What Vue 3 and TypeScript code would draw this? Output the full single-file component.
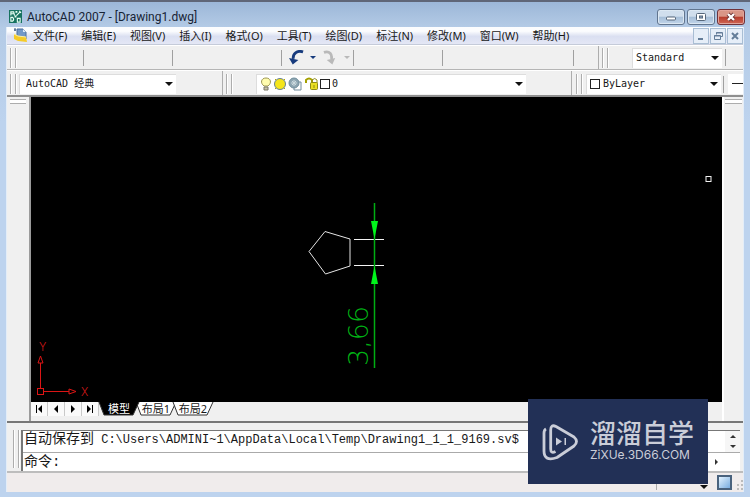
<script setup lang="ts">
import { ref } from 'vue'

const menus: string[] = [
  '文件(F)', '编辑(E)', '视图(V)', '插入(I)', '格式(O)', '工具(T)',
  '绘图(D)', '标注(N)', '修改(M)', '窗口(W)', '帮助(H)',
]
const tabs: string[] = ['模型', '布局1', '布局2']
const activeTab = ref<string>('模型')
const workspace = ref<string>('AutoCAD 经典')
const textStyle = ref<string>('Standard')
const layer = ref<string>('0')
const color = ref<string>('ByLayer')
const command = ref<string>('')
const navShapes: { label: string; path: string }[] = [
  { label: '第一个', path: 'M3 2h1v8h-1zM9 2v8l-4-4z' },
  { label: '上一个', path: 'M8 2v8l-4-4z' },
  { label: '下一个', path: 'M4 2v8l4-4z' },
  { label: '最后一个', path: 'M3 2v8l4-4zM8 2h1v8h-1z' },
]
</script>

<template>
  <div class="window">
    <header class="titlebar">
      <svg class="app-icon" viewBox="0 0 14 14" aria-hidden="true">
        <rect width="14" height="14" fill="#17725f" />
        <path d="M2 6V2h3l1 4M2 4h4M8 6l4-4M11 1l2 2M2 12V8h2q2 2 0 4zM9 9h3v4H9z" fill="none" stroke="#e9fff4" stroke-width="1.2" />
        <path d="M7 1h2v2H7zM6 6h2v2H6z" fill="#e9fff4" />
      </svg>
      <h1>AutoCAD 2007 - [Drawing1.dwg]</h1>
      <div class="win-buttons">
        <button type="button" aria-label="最小化">
          <svg viewBox="0 0 12 10"><rect x="1.500" y="5" width="9" height="3" rx="1" fill="#fff" stroke="#56677b" /></svg>
        </button>
        <button type="button" aria-label="最大化">
          <svg viewBox="0 0 12 10"><rect x="1.500" y="1.500" width="9" height="7" rx="1" fill="#fff" stroke="#56677b" /><rect x="4.500" y="4" width="3" height="2" fill="#8fa9c5" stroke="#56677b" /></svg>
        </button>
        <button type="button" class="close" aria-label="关闭">
          <svg viewBox="0 0 12 10"><path d="M3 2l6 6M9 2L3 8" stroke="#6d3030" stroke-width="4" /><path d="M3 2l6 6M9 2L3 8" stroke="#fff" stroke-width="2.400" /></svg>
        </button>
      </div>
    </header>

    <div class="frame">
      <nav class="menubar">
        <svg class="doc-icon" viewBox="0 0 14 15" aria-hidden="true">
          <path d="M4 1h6l3 3v7H4z" fill="#7399c8" stroke="#4b6e9d" />
          <path d="M10 1v3h3" fill="#dce9f7" />
          <path d="M1 6l4 2 8 1 1 5-9-1-4-2z" fill="#f5cb28" />
          <path d="M1 6l4 2 8 1" fill="none" stroke="#fff0a0" />
          <path d="M1 2h2M2 0v3" stroke="#30517d" />
        </svg>
        <button v-for="m in menus" :key="m" type="button" class="menu">{{ m }}</button>
        <div class="mdi-buttons">
          <button type="button" aria-label="最小化文档"><svg viewBox="0 0 10 10"><path d="M2 8h5" stroke="#647d99" stroke-width="2" /></svg></button>
          <button type="button" aria-label="还原文档"><svg viewBox="0 0 10 10"><path d="M3.500 3.500V1.500h6v4h-2M1.500 4.500h6v4h-6zM3 2h6M1 5h6" fill="none" stroke="#647d99" /></svg></button>
          <button type="button" aria-label="关闭文档"><svg viewBox="0 0 10 10"><path d="M2 2l6 6M8 2L2 8" stroke="#647d99" stroke-width="2" /></svg></button>
        </div>
      </nav>

      <div class="toolbar standard-row">
        <section class="panel">
          <i class="grip"></i>
          <div class="group narrow"></div>
          <div class="group"></div>
          <div class="group wide"></div>
          <div class="group history-tools">
            <button type="button" class="tool" aria-label="放弃"><svg viewBox="0 0 16 16"><path d="M15 1.500C9-.5 4 3 4.500 9" fill="none" stroke="#173b7d" stroke-width="3" /><path d="M0 8l10 2-6 5z" fill="#173b7d" /></svg></button>
            <i class="caret small"></i>
            <button type="button" class="tool" aria-label="重做"><svg viewBox="0 0 16 16"><path d="M1 2c6-2 9 2 8 7" fill="none" stroke="#b9b9b9" stroke-width="3" /><path d="M4 10l9-2-3 7z" fill="#b9b9b9" /></svg></button>
            <i class="caret small muted"></i>
          </div>
          <div class="group"></div>
          <div class="group last"></div>
        </section>
        <section class="panel styles">
          <i class="grip"></i>
          <label class="combo text-style">
            <select v-model="textStyle" aria-label="文字样式"><option>Standard</option></select>
            <i class="caret"></i>
          </label>
          <i class="divider"></i>
        </section>
      </div>

      <div class="toolbar layer-row">
        <section class="panel">
          <i class="grip"></i>
          <label class="combo workspace">
            <select v-model="workspace" aria-label="工作空间"><option>AutoCAD 经典</option></select>
            <i class="caret"></i>
          </label>
        </section>
        <section class="panel layers">
          <i class="grip"></i>
          <label class="combo layer">
            <svg class="layer-icons" viewBox="0 0 72 16" aria-hidden="true">
              <path d="M4 10C0 7 1 2 6 2s6 5 2 8z" fill="#fffcae" stroke="#9d9651" />
              <path d="M4 11h4v3H4z" fill="#c9c4a7" stroke="#797666" />
              <circle cx="20" cy="8" r="5.500" fill="#f5e51b" stroke="#668092" />
              <path d="M15 3l1 1M25 3l-1 1M15 13l1-1M25 13l-1-1" stroke="#b8a700" />
              <path d="M34 6h7v8h-7z" fill="#fff" stroke="#718a9b" />
              <circle cx="34" cy="7" r="5" fill="#8da5b1" stroke="#708e9c" />
              <path d="M31 7h6M34 4v6M32 5l4 4M36 5l-4 4" stroke="#cbd9de" />
              <path d="M46 7V4q3-3 6 0v3" fill="none" stroke="#a5a000" stroke-width="2" />
              <rect x="50.500" y="6.500" width="7" height="7" rx="1" fill="#eadf22" stroke="#8f8b17" />
              <path d="M52 6V4q3-3 5 0v3M54 9v3" fill="none" stroke="#8f8b17" />
              <rect x="60.500" y="3.500" width="9" height="9" fill="#fff" stroke="#222" />
            </svg>
            <select v-model="layer" aria-label="图层"><option>0</option></select>
            <i class="caret"></i>
          </label>
        </section>
        <section class="panel properties">
          <i class="grip"></i>
          <label class="combo color">
            <i class="swatch"></i>
            <select v-model="color" aria-label="颜色"><option>ByLayer</option></select>
            <i class="caret"></i>
          </label>
          <i class="divider"></i>
          <div class="linetype"></div>
        </section>
      </div>

      <main class="workspace-area">
        <aside class="dock"><i class="dock-grip"></i></aside>
        <div class="document">
          <div class="canvas">
            <svg class="drawing" viewBox="31 97 691 305" preserveAspectRatio="xMinYMax meet" role="img" aria-label="标注为 3,66 的五边形">
              <path d="M325 231.500L350 239v27l-24.500 8L309 251.500z" fill="none" stroke="#e5e5e5" />
              <path d="M354 239.500h30M354 265.500h30" stroke="#f4f4f4" />
              <path d="M374.500 203v165" stroke="#00ae13" stroke-width="1.500" />
              <path d="M371 221h7l-3.500 18zM371 284h7l-3.500-18z" fill="#00f51b" />
              <text class="dimension" transform="translate(368 366) rotate(-90)">3,66</text>
              <g fill="none" stroke="#dc1515">
                <path d="M40.500 388V363M38 363h5l-2.500-7zM44 391.500h25M69 389v5l7-2.500z" />
                <rect x="37.500" y="388.500" width="6" height="6" />
              </g>
              <text class="axis" x="39" y="351">Y</text>
              <text class="axis" x="81" y="396">X</text>
              <rect x="706" y="176.500" width="5" height="5" fill="none" stroke="#f2f2f2" />
            </svg>
          </div>
          <div class="tabs">
            <button v-for="n in navShapes" :key="n.label" type="button" class="tab-nav" :aria-label="n.label">
              <svg viewBox="0 0 12 12"><path :d="n.path" /></svg>
            </button>
            <div class="tab-list">
              <button v-for="t in tabs" :key="t" type="button" class="tab" :class="{ active: t === activeTab }" @click="activeTab = t">
                <svg class="tab-shape" viewBox="0 0 40 14" preserveAspectRatio="none"><path d="M0 0l5 13h29l6-13" /></svg>
                <span>{{ t }}</span>
              </button>
            </div>
          </div>
        </div>
        <aside class="dock right"><i class="dock-grip"></i></aside>
      </main>

      <section class="command">
        <i class="grip"></i>
        <div class="console">
          <div class="log">
            <p><span class="cjk">自动保存到</span> C:\Users\ADMINI~1\AppData\Local\Temp\Drawing1_1_1_9169.sv$</p>
            <div class="scroll"><i class="up"></i><i class="caret small dark"></i></div>
          </div>
          <div class="prompt">
            <label for="command-line" class="cjk">命令:</label>
            <input id="command-line" v-model="command" type="text" autocomplete="off" />
            <i class="right-arrow"></i>
          </div>
        </div>
      </section>

      <footer class="status">
        <i class="status-mark"></i>
        <i class="caret"></i>
        <button type="button" class="clean" aria-label="全屏显示"></button>
        <svg class="resize" viewBox="0 0 8 14" aria-hidden="true"><path d="M6 4h2v2H6zM6 8h2v2H6zM2 8h2v2H2zM6 12h2v2H6zM2 12h2v2H2z" fill="#bbb" /></svg>
      </footer>
    </div>

    <div class="watermark">
      <svg viewBox="0 0 36 38" aria-hidden="true">
        <path d="M13.500 28.500Q8.700 31 8.700 26V7Q8.700 1 14 3.500L32 14Q37 18.500 32 23L15 34.500Q2 39 2 28V10Q2 7 4 6" fill="none" stroke="#cacdd8" stroke-width="2.800" stroke-linejoin="round" />
        <path d="M14 14.500v8l6-4zM22.500 15H24v7h-1.500z" fill="#cacdd8" />
      </svg>
      <div class="brand"><strong>溜溜自学</strong><small>ZiXUe.3D66.COM</small></div>
    </div>
  </div>
</template>

<style>
body { margin: 0; }
</style>

<style scoped>
* { box-sizing: border-box; }
button, select, input { font: inherit; color: inherit; margin: 0; padding: 0; border: 0; background: none; border-radius: 0; }
button { display: flex; align-items: center; justify-content: center; }
i { display: block; flex: none; }
svg { display: block; flex: none; }
.window {
  position: relative; display: flex; flex-direction: column; min-height: 100vh; overflow: hidden;
  padding: 0 6px 5px; border-top: 2px solid #5f6678; color: #181818;
  background: linear-gradient(#9cb7d8, #b4cbe6 26px, #bdd3ee 120px);
  font: 12px/16px "Noto Sans", "Noto Sans CJK SC", sans-serif;
}
.titlebar { display: flex; align-items: center; height: 25px; padding: 4px 0 0 3px; }
.app-icon { width: 13px; height: 13px; }
h1 { flex: 1; margin: 0 0 0 5px; font: 12px/18px Roboto, sans-serif; color: #172335; }
.win-buttons { display: flex; gap: 2px; margin-right: -1px; }
.win-buttons button { width: 28px; height: 16px; border: 1px solid #61758f; border-radius: 3px; background: linear-gradient(#d0deed 45%, #a5bdd7 50%, #c1d5ea); box-shadow: inset 0 0 0 1px #dce8f3; }
.win-buttons .close { border-color: #70323a; background: linear-gradient(#d99687 45%, #b73c2c 50%, #cf6756); box-shadow: inset 0 0 0 1px #e2a59b; }
.win-buttons svg { width: 12px; height: 10px; }
.frame { flex: 1; display: flex; flex-direction: column; min-width: 0; border: 1px solid #e3edf8; border-width: 0 1px; background: #f0f0f0; }
.menubar { display: flex; align-items: center; height: 18px; padding-left: 6px; background: linear-gradient(#fbfcfe 25%, #dadff1 55%, #e4e7f5); border-bottom: 1px solid #c5cbd9; }
.doc-icon { width: 14px; height: 15px; margin-right: 6px; }
.menu { margin-right: 14px; white-space: nowrap; font-size: 11px; line-height: 16px; }
.mdi-buttons { display: flex; gap: 1px; margin-left: auto; }
.mdi-buttons button { width: 16px; height: 16px; border: 1px solid #a9bed4; background: #e6eef8; }
.mdi-buttons svg { width: 10px; height: 10px; }
.toolbar { display: grid; height: 25px; border-top: 1px solid #fff; border-bottom: 1px solid #b5b5b5; }
.standard-row { grid-template-columns: 1fr 144px; }
.layer-row { grid-template-columns: 216px 1fr 171px; height: 27px; border-bottom: 2px solid #8f8f8f; }
.layer-row .panel { padding-top: 2px; }
.panel { display: flex; align-items: center; min-width: 0; padding-left: 3px; border-right: 1px solid #adadad; overflow: hidden; }
.panel:last-child { border-right: 0; }
.grip { width: 6px; height: 20px; border: solid #adadad; border-width: 0 1px; box-shadow: inset 1px 0 #fff, 1px 0 #fff; }
.group { flex: none; height: 16px; width: 89px; border-right: 1px solid #a0a0a0; }
.group.narrow { width: 68px; }
.group.wide { width: 109px; }
.group.last { width: 131px; }
.history-tools { display: flex; align-items: center; width: 72px; gap: 6px; padding-left: 6px; }
.tool { width: 16px; height: 16px; }
.tool svg { width: 15px; height: 16px; }
.caret { width: 0; height: 0; border: solid transparent; border-width: 4px 4px 0; border-top-color: #111; }
.caret.small { border-width: 3px 3px 0; border-top-color: #173b7d; }
.caret.muted { border-top-color: #b9b9b9; }
.caret.dark { border-top-color: #333; }
.combo { display: flex; align-items: center; height: 20px; padding: 0 3px 0 4px; background: #fff; box-shadow: inset 1px 1px #ddd; font: 10px/16px "DejaVu Sans Mono", "Noto Sans CJK SC", monospace; }
.combo select { flex: 1; min-width: 0; appearance: none; outline: none; }
.text-style { width: 90px; margin: 0 3px 0 24px; }
.workspace { width: 157px; margin-left: 3px; padding-left: 7px; }
.layer { flex: 1; margin: 0 45px 0 24px; }
.layer-icons { width: 72px; height: 16px; }
.properties { padding-left: 4px; }
.color { width: 135px; margin: 0 2px 0 4px; }
.swatch { width: 10px; height: 10px; margin-right: 3px; border: 1px solid #222; }
.divider { width: 1px; height: 17px; background: #a0a0a0; }
.linetype { flex: 1; height: 20px; margin-left: 4px; background: linear-gradient(#222, #222) 4px 9px / 100% 1px no-repeat #fff; }
.workspace-area { flex: 1; display: grid; grid-template-columns: 24px 1fr 21px; min-height: 0; }
.dock { padding: 2px 3px; border-right: 2px solid #9b9b9b; }
.dock.right { border-right: 0; border-left: 2px solid #fff; padding: 2px 1px; }
.dock-grip { height: 5px; border: solid #adadad; border-width: 1px 0; background: #fff; }
.document { display: flex; flex-direction: column; min-width: 0; }
.canvas { flex: 1; position: relative; background: #000; }
.drawing { position: absolute; inset: 0; width: 100%; height: 100%; }
.dimension { font: 200 27px "DejaVu Sans", sans-serif; fill: #00b315; }
.axis { font: 300 11px Inter, sans-serif; fill: #d01818; }
.tabs { display: flex; height: 19px; align-items: flex-start; }
.tab-nav { width: 17px; height: 14px; background: #fafafa; border-right: 1px solid #c9c9c9; }
.tab-nav svg { width: 12px; height: 12px; }
.tab-list { display: flex; }
.tab { position: relative; width: 40px; height: 14px; margin-right: -3px; line-height: 14px; font-size: 11px; }
.tab-shape { position: absolute; inset: 0; width: 100%; height: 100%; fill: #fff; stroke: #333; overflow: visible; }
.tab span { position: relative; }
.tab.active { z-index: 1; color: #fff; }
.tab.active .tab-shape { fill: #000; }
.command { display: flex; height: 52px; padding: 7px 3px 0 6px; border-top: 2px solid #777; border-bottom: 2px solid #bdbdbd; }
.command .grip { height: 38px; }
.console { flex: 1; min-width: 0; margin-left: 2px; border: solid #777; border-width: 1px 0 0 2px; background: #fff; font: 12px/16px "Liberation Mono", "Noto Sans CJK SC", monospace; }
.log { display: flex; height: 22px; padding-left: 1px; border-bottom: 1px solid #aaa; }
.log p { flex: 1; margin: 0; white-space: nowrap; overflow: hidden; }
.cjk { font-size: 14px; }
.scroll { display: flex; flex-direction: column; align-items: center; justify-content: space-around; width: 15px; background: #f6f6f6; }
.up { border: solid transparent; border-width: 0 3px 3px; border-bottom-color: #333; }
.prompt { display: flex; align-items: center; height: 18px; padding-left: 1px; }
.prompt input { flex: 1; min-width: 0; outline: none; }
.right-arrow { margin-right: 22px; border: solid transparent; border-width: 3px 0 3px 3px; border-left-color: #333; }
.status { display: flex; align-items: center; justify-content: flex-end; height: 19px; background: #f0ecec; }
.status-mark { width: 4px; height: 14px; margin-right: 40px; border-left: 1px solid #aaa; }
.status .caret { align-self: flex-end; margin: 0 9px 3px 0; }
.clean { width: 15px; height: 15px; border: 2px solid #49627d; background: linear-gradient(135deg, #e3f3ff, #79ade0); }
.resize { width: 8px; height: 14px; margin-left: 3px; }
.watermark { position: absolute; z-index: 2; right: 42px; bottom: 13px; display: flex; align-items: center; gap: 12px; width: 180px; height: 85px; padding-left: 14px; color: #cacdd8; background: #223056; }
.watermark svg { width: 36px; height: 38px; }
.brand { padding-bottom: 6px; }
.watermark strong { display: block; font: 500 26px/32px "Noto Sans CJK SC", sans-serif; }
.watermark small { display: block; font: 12px/14px Inter, sans-serif; }
</style>
